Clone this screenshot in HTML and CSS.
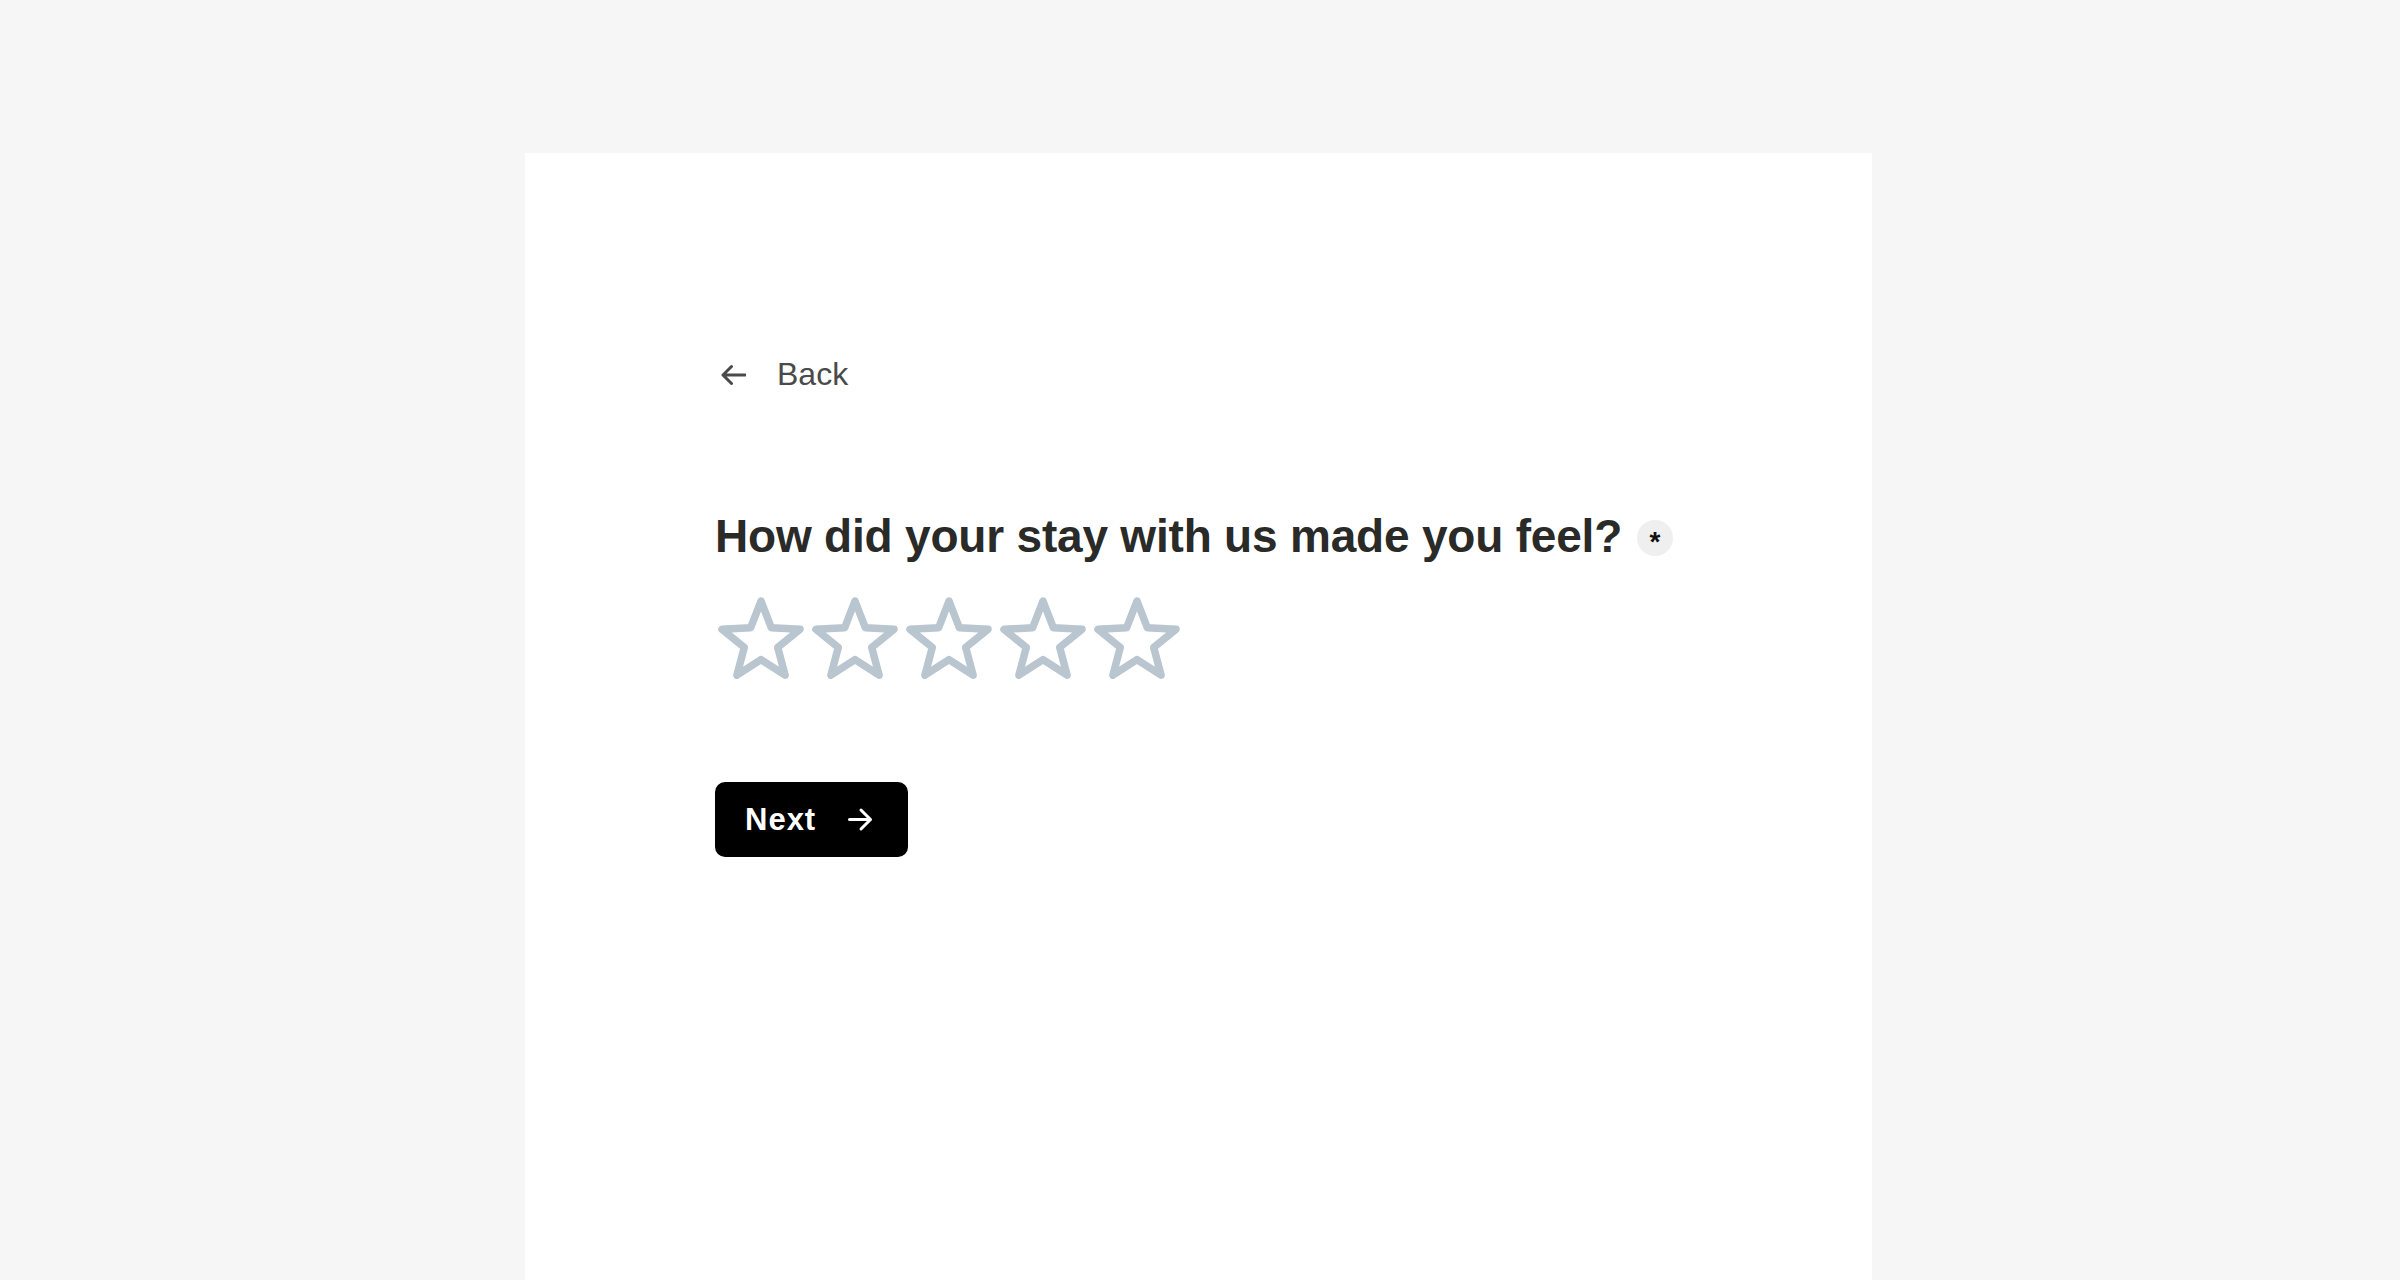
FILE: index.html
```html
<!DOCTYPE html>
<html lang="en">
<head>
<meta charset="utf-8">
<title>Feedback</title>
<link rel="stylesheet" href="styles.css">
</head>
<body>
<main class="card">
  <div class="content">
    <a class="back" href="#">
      <svg class="back-icon" width="26" height="22" viewBox="0 0 26 22" aria-hidden="true">
        <path d="M25 11H3M11.5 2.5L3 11l8.5 8.5" fill="none" stroke="currentColor" stroke-width="3" stroke-linecap="round" stroke-linejoin="round"/>
      </svg>
      <span>Back</span>
    </a>
    <h1 class="question">
      <span>How did your stay with us made you feel?</span>
      <span class="required">*</span>
    </h1>
    <div class="stars">
      <svg class="star" width="86" height="82" viewBox="0 0 86 82"><path d="M43 4L53.35 30.76L82 32.33L59.74 50.44L67.1 78.17L43 62.6L18.9 78.17L26.26 50.44L4 32.33L32.65 30.76Z"/></svg>
      <svg class="star" width="86" height="82" viewBox="0 0 86 82"><path d="M43 4L53.35 30.76L82 32.33L59.74 50.44L67.1 78.17L43 62.6L18.9 78.17L26.26 50.44L4 32.33L32.65 30.76Z"/></svg>
      <svg class="star" width="86" height="82" viewBox="0 0 86 82"><path d="M43 4L53.35 30.76L82 32.33L59.74 50.44L67.1 78.17L43 62.6L18.9 78.17L26.26 50.44L4 32.33L32.65 30.76Z"/></svg>
      <svg class="star" width="86" height="82" viewBox="0 0 86 82"><path d="M43 4L53.35 30.76L82 32.33L59.74 50.44L67.1 78.17L43 62.6L18.9 78.17L26.26 50.44L4 32.33L32.65 30.76Z"/></svg>
      <svg class="star" width="86" height="82" viewBox="0 0 86 82"><path d="M43 4L53.35 30.76L82 32.33L59.74 50.44L67.1 78.17L43 62.6L18.9 78.17L26.26 50.44L4 32.33L32.65 30.76Z"/></svg>
    </div>
    <button class="next" type="button">
      <span>Next</span>
      <svg width="25" height="25" viewBox="0 0 25 25" aria-hidden="true">
        <path d="M1.5 12.5H22.5M13 3l9.5 9.5L13 22" fill="none" stroke="currentColor" stroke-width="3" stroke-linecap="round" stroke-linejoin="round"/>
      </svg>
    </button>
  </div>
</main>
</body>
</html>
```
FILE: styles.css
```css
html, body {
  margin: 0;
  padding: 0;
  height: 100%;
}
body {
  background: #f6f6f6;
  font-family: "Liberation Sans", Arial, sans-serif;
  overflow: hidden;
}
.card {
  margin: 153px 0 0 525px;
  width: 1347px;
  height: 1127px;
  background: #ffffff;
  box-sizing: border-box;
}
.content {
  padding: 201px 0 0 190px;
  display: flex;
  flex-direction: column;
  align-items: flex-start;
}
.back {
  display: flex;
  align-items: center;
  gap: 31px;
  height: 40px;
  padding-left: 5px;
  color: #4a4a4a;
  text-decoration: none;
  font-size: 32px;
  line-height: 40px;
}
.back-icon {
  display: block;
  margin-top: 2px;
}
.question {
  margin: 115px 0 0 0;
  display: flex;
  align-items: center;
  gap: 15px;
  font-size: 46px;
  line-height: 55px;
  font-weight: 700;
  letter-spacing: -0.2px;
  color: #2a2a29;
}
.required {
  display: inline-flex;
  align-items: center;
  justify-content: center;
  width: 36px;
  height: 36px;
  border-radius: 50%;
  background: #efefef;
  color: #111;
  font-size: 28px;
  line-height: 1;
  padding-top: 8px;
  box-sizing: border-box;
  letter-spacing: 0;
  margin-top: 2px;
}
.stars {
  margin-top: 33px;
  padding-left: 3px;
  display: flex;
  gap: 8px;
}
.star {
  display: block;
}
.star path {
  fill: none;
  stroke: #b9c5cf;
  stroke-width: 7.5;
  stroke-linejoin: round;
}
.next {
  margin-top: 103px;
  display: flex;
  align-items: center;
  gap: 32px;
  height: 75px;
  padding: 0 35px 0 30px;
  border: none;
  border-radius: 10px;
  background: #000;
  color: #fff;
  font-family: "Liberation Sans", Arial, sans-serif;
  font-size: 31px;
  font-weight: 700;
  letter-spacing: 1px;
  cursor: pointer;
}
.next svg {
  display: block;
}
```
